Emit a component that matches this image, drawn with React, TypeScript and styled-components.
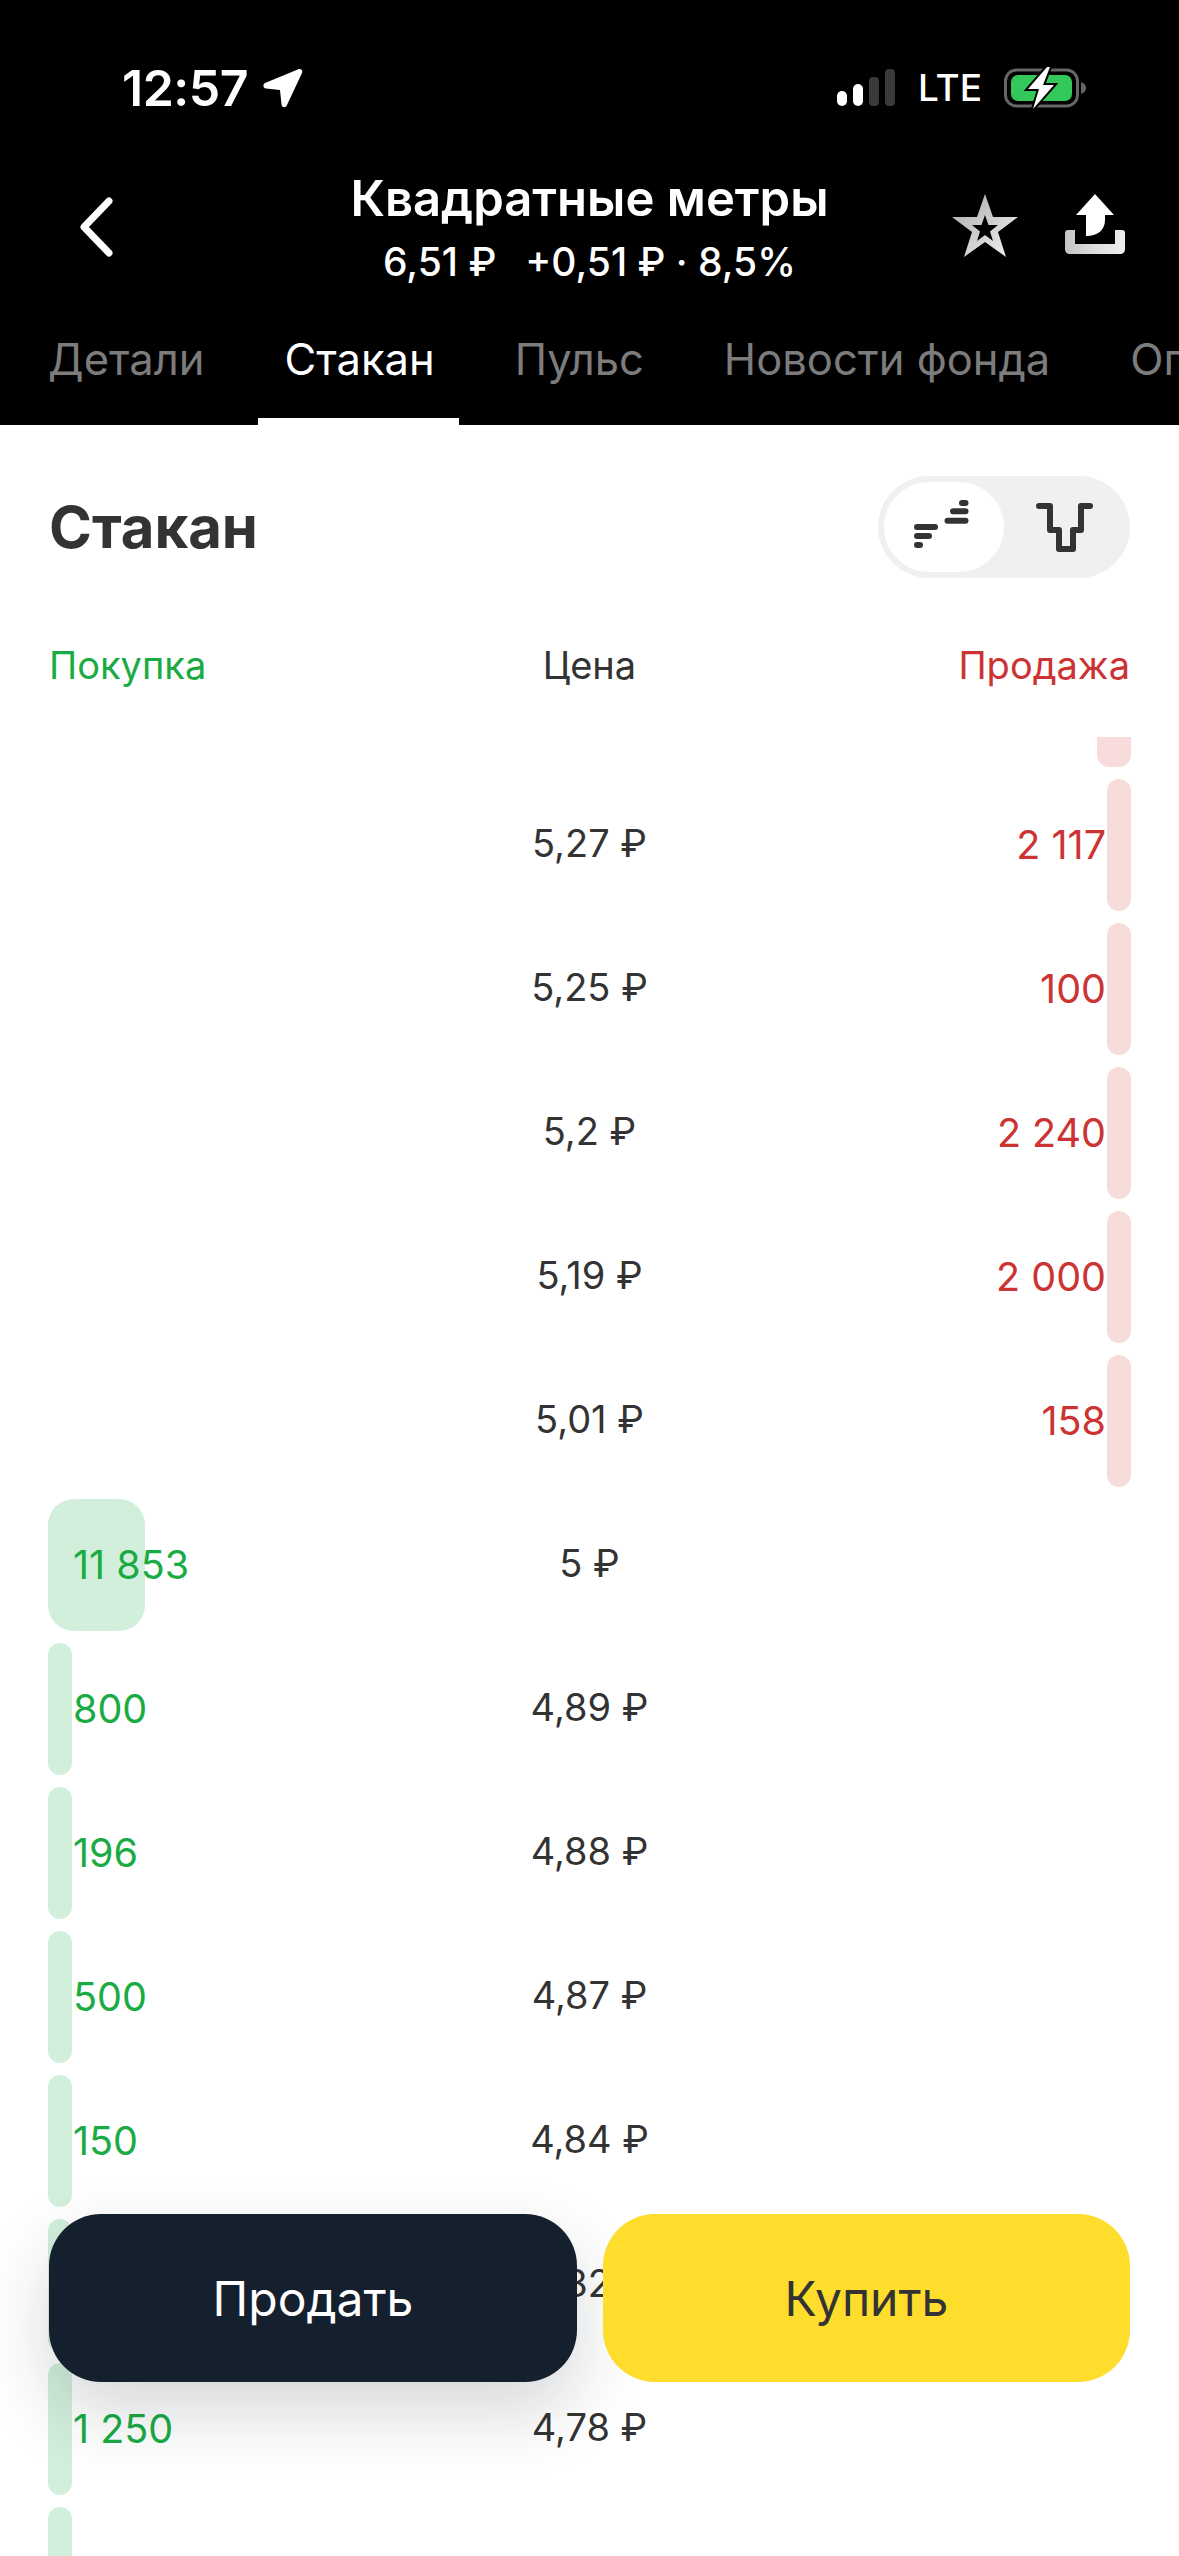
import React from 'react';
import styled, { createGlobalStyle } from 'styled-components';

const GlobalStyle = createGlobalStyle`
  html, body {
    margin: 0;
    padding: 0;
    background: #ffffff;
  }
  body {
    font-family: 'Inter', 'Roboto', 'Liberation Sans', sans-serif;
  }
`;

const Page = styled.div`
  position: relative;
  width: 1179px;
  height: 2556px;
  overflow: hidden;
  display: flex;
  flex-direction: column;
  background: #fff;
`;

const Header = styled.header`
  height: 425px;
  flex: none;
  background: #000;
  color: #fff;
  display: flex;
  flex-direction: column;
  box-sizing: border-box;
  padding-top: 60px;
`;

const StatusBar = styled.div`
  height: 56px;
  display: flex;
  align-items: center;
  padding: 0 93px 0 122px;
`;

const Time = styled.span`
  font-size: 50px;
  font-weight: 600;
  letter-spacing: -0.5px;
  line-height: 50px;
`;

const StatusRight = styled.div`
  margin-left: auto;
  display: flex;
  align-items: center;
`;

const Lte = styled.span`
  font-size: 37px;
  font-weight: 500;
  line-height: 40px;
  margin: 0 22px 0 23px;
`;

const NavRow = styled.div`
  position: relative;
  height: 112px;
  margin-top: 52px;
  display: flex;
  align-items: flex-start;
  justify-content: center;
`;

const BackButton = styled.div`
  position: absolute;
  left: 74px;
  top: 25px;
  display: flex;
`;

const TitleBlock = styled.div`
  display: flex;
  flex-direction: column;
  align-items: center;
`;

const Title = styled.div`
  font-size: 49px;
  font-weight: 600;
  line-height: 62px;
`;

const Subtitle = styled.div`
  display: flex;
  gap: 29px;
  margin-top: 9px;
  font-size: 39px;
  font-weight: 500;
  line-height: 46px;
  white-space: pre;
`;

const NavActions = styled.div`
  position: absolute;
  right: 54px;
  top: 26px;
  display: flex;
  align-items: flex-start;
  gap: 47px;
`;

const Tabs = styled.nav`
  margin-top: auto;
  height: 94px;
  display: flex;
  overflow: hidden;
  padding-left: 48px;
  gap: 80px;
  white-space: nowrap;
`;

const Tab = styled.div<{ $active?: boolean }>`
  position: relative;
  font-size: 43.5px;
  line-height: 56px;
  color: ${p => (p.$active ? '#fff' : '#7c7c7c')};

  ${p =>
    p.$active &&
    `
    &::after {
      content: '';
      position: absolute;
      left: -26px;
      right: -24px;
      bottom: 0;
      height: 7px;
      background: #fff;
    }
  `}
`;

const SectionHead = styled.div`
  flex: none;
  display: flex;
  align-items: center;
  justify-content: space-between;
  padding: 51px 49px 0 49px;
  height: 102px;
`;

const SectionTitle = styled.h1`
  margin: 0;
  font-size: 58px;
  font-weight: 700;
  color: #333333;
`;

const Toggle = styled.div`
  width: 252px;
  height: 102px;
  box-sizing: border-box;
  padding: 6px;
  border-radius: 51px;
  background: #eef0f1;
  display: flex;
`;

const ToggleOption = styled.div<{ $active?: boolean }>`
  width: 120px;
  border-radius: 45px;
  background: ${p => (p.$active ? '#fff' : 'transparent')};
  display: flex;
  align-items: center;
  justify-content: center;
`;

const Columns = styled.div`
  flex: none;
  display: grid;
  grid-template-columns: 1fr 1fr 1fr;
  padding: 0 49px;
  margin-top: 62px;
  font-size: 38px;
  line-height: 50px;
`;

const ColBuy = styled.div`
  color: #1aab44;
`;

const ColPrice = styled.div`
  color: #333;
  text-align: center;
`;

const ColSell = styled.div`
  color: #cc3333;
  text-align: right;
`;

const BookViewport = styled.div`
  flex: 1;
  min-height: 0;
  overflow: hidden;
  margin-top: 47px;
`;

const BookList = styled.div`
  margin-top: -102px;
  display: flex;
  flex-direction: column;
  gap: 12px;
  padding: 0 48px;
`;

const Row = styled.div`
  height: 132px;
  display: grid;
  grid-template-columns: 1fr 280px 1fr;
  font-size: 38px;
`;

const Side = styled.div<{ $sell?: boolean }>`
  position: relative;
  display: flex;
  align-items: center;
  box-sizing: border-box;
  font-size: 39.5px;
  justify-content: ${p => (p.$sell ? 'flex-end' : 'flex-start')};
  padding: ${p => (p.$sell ? '0 25px 0 0' : '0 0 0 25px')};
  color: ${p => (p.$sell ? '#cc3333' : '#1aab44')};
`;

const Bar = styled.div<{ $sell?: boolean; $large?: boolean }>`
  position: absolute;
  top: 0;
  bottom: 0;
  ${p => (p.$sell ? 'right: 0;' : 'left: 0;')}
  background: ${p => (p.$sell ? '#f8dcdc' : '#d2efdc')};
  border-radius: ${p => (p.$large ? '26px' : '12px')};
`;

const Quantity = styled.span`
  position: relative;
  white-space: nowrap;
`;

const Price = styled.div`
  display: flex;
  align-items: center;
  justify-content: center;
  color: #333;
  padding-bottom: 4px;
`;

const Actions = styled.div`
  position: absolute;
  left: 49px;
  top: 2214px;
  height: 168px;
  display: grid;
  grid-template-columns: 528px 527px;
  column-gap: 26px;
`;

const ActionButton = styled.div<{ $primary?: boolean }>`
  border-radius: 52px;
  display: flex;
  align-items: center;
  justify-content: center;
  font-size: 48px;
  background: ${p => (p.$primary ? '#ffdd2d' : '#15202e')};
  color: ${p => (p.$primary ? '#333' : '#fff')};
  box-shadow: ${p => (p.$primary ? 'none' : '0 30px 70px rgba(21, 32, 46, 0.18)')};
`;

const rows: { price: string; sell?: string; buy?: string; bar?: number; side?: 'buy' | 'sell' }[] = [
  { price: '', side: 'sell', bar: 34 },
  { price: '5,27 ₽', sell: '2 117', side: 'sell', bar: 24 },
  { price: '5,25 ₽', sell: '100', side: 'sell', bar: 24 },
  { price: '5,2 ₽', sell: '2 240', side: 'sell', bar: 24 },
  { price: '5,19 ₽', sell: '2 000', side: 'sell', bar: 24 },
  { price: '5,01 ₽', sell: '158', side: 'sell', bar: 24 },
  { price: '5 ₽', buy: '11 853', side: 'buy', bar: 97 },
  { price: '4,89 ₽', buy: '800', side: 'buy', bar: 24 },
  { price: '4,88 ₽', buy: '196', side: 'buy', bar: 24 },
  { price: '4,87 ₽', buy: '500', side: 'buy', bar: 24 },
  { price: '4,84 ₽', buy: '150', side: 'buy', bar: 24 },
  { price: '4,82 ₽', side: 'buy', bar: 24 },
  { price: '4,78 ₽', buy: '1 250', side: 'buy', bar: 24 },
  { price: '', side: 'buy', bar: 24 },
];

const SignalIcon = () => (
  <svg width="58" height="38" viewBox="0 0 58 38">
    <rect x="0" y="22" width="10" height="15" rx="5" fill="#fff" />
    <rect x="16" y="15" width="10" height="22" rx="5" fill="#fff" />
    <rect x="32" y="8" width="10" height="29" rx="4" fill="#3a3a3a" />
    <rect x="48" y="0" width="10" height="37" rx="4" fill="#3a3a3a" />
  </svg>
);

const BatteryIcon = () => (
  <svg width="82" height="42" viewBox="0 0 82 42">
    <rect x="1.5" y="3" width="72" height="36" rx="11" fill="none" stroke="#666" strokeWidth="3" />
    <rect x="7" y="8" width="61" height="26" rx="7" fill="#34c759" />
    <path d="M43 0 L24 22 H35 L29 42 L50 18 H39 L46 0 Z" fill="#fff" stroke="#000" strokeWidth="4" paintOrder="stroke" />
    <path d="M77 15 C80 16 82 18 82 21 C82 24 80 26 77 27 Z" fill="#666" />
  </svg>
);

const LocationIcon = () => (
  <svg width="40" height="40" viewBox="0 0 40 40" style={{ marginLeft: 15 }}>
    <path
      d="M36 1 C38 0.5 40 2 39 5 L24 37 C22.5 40.5 19 39.5 18.5 36.5 L17 22 L3 20.5 C0 20 -0.5 16.5 2 15 Z"
      fill="#fff"
    />
  </svg>
);

const BackIcon = () => (
  <svg width="42" height="68" viewBox="0 0 42 68" fill="none">
    <path d="M35 8 L10 34 L35 60" stroke="#fff" strokeWidth="7" strokeLinecap="round" strokeLinejoin="round" />
  </svg>
);

const StarIcon = () => (
  <svg width="66" height="63" viewBox="0 0 66 63">
    <defs>
      <linearGradient id="starFill" x1="0" y1="0" x2="1" y2="1">
        <stop offset="0" stopColor="#a8a8a8" />
        <stop offset="1" stopColor="#f4f4f4" />
      </linearGradient>
    </defs>
    <path
      fillRule="evenodd"
      fill="url(#starFill)"
      d="M33 0 L41 23 L66 23 L46 38 L54 63 L33 48 L12 63 L20 38 L0 23 L25 23 Z M33 21 L29.5 31 L20 31 L28 37.5 L25 47 L33 41 L41 47 L38 37.5 L46 31 L36.5 31 Z"
    />
  </svg>
);

const ShareIcon = () => (
  <svg width="60" height="60" viewBox="0 0 60 60">
    <defs>
      <linearGradient id="shareFill" x1="0" y1="0" x2="1" y2="0">
        <stop offset="0" stopColor="#c4c4c4" />
        <stop offset="0.5" stopColor="#dedede" />
        <stop offset="1" stopColor="#eeeeee" />
      </linearGradient>
    </defs>
    <path d="M30 0 L49 21 H40 V26 C40 35 34 42 21 42 V21 H11 Z" fill="#fff" />
    <path
      fill="url(#shareFill)"
      d="M3 36 H10 V50 H50 V36 H57 C59 36 60 37 60 39 V55 C60 58 58 60 55 60 H5 C2 60 0 58 0 55 V39 C0 37 1 36 3 36 Z"
    />
  </svg>
);

const SplitIcon = () => (
  <svg width="61" height="54" viewBox="0 0 61 54" fill="#333">
    <rect x="45" y="0" width="9.5" height="6" rx="3" />
    <rect x="36" y="8.3" width="18.5" height="6" rx="3" />
    <rect x="30.5" y="17.7" width="24" height="6" rx="3" />
    <rect x="0" y="24" width="24" height="6" rx="3" />
    <rect x="0" y="33" width="18" height="6" rx="3" />
    <rect x="0" y="42" width="9" height="6" rx="3" />
  </svg>
);

const DepthIcon = () => (
  <svg width="57" height="49" viewBox="0 0 57 49" fill="none">
    <path
      d="M3 3 H14 V27 H23 V46 H37 V27 H45 V3 H54"
      stroke="#333"
      strokeWidth="6"
      strokeLinecap="round"
      strokeLinejoin="round"
    />
  </svg>
);

const App: React.FC = () => {
  return (
    <Page>
      <GlobalStyle />
      <Header>
        <StatusBar>
          <Time>12:57</Time>
          <LocationIcon />
          <StatusRight>
            <SignalIcon />
            <Lte>LTE</Lte>
            <BatteryIcon />
          </StatusRight>
        </StatusBar>
        <NavRow>
          <BackButton>
            <BackIcon />
          </BackButton>
          <TitleBlock>
            <Title>Квадратные метры</Title>
            <Subtitle>
              <span>6,51 ₽</span>
              <span>+0,51 ₽ · 8,5%</span>
            </Subtitle>
          </TitleBlock>
          <NavActions>
            <StarIcon />
            <ShareIcon />
          </NavActions>
        </NavRow>
        <Tabs>
          <Tab>Детали</Tab>
          <Tab $active>Стакан</Tab>
          <Tab>Пульс</Tab>
          <Tab>Новости фонда</Tab>
          <Tab>Операции</Tab>
        </Tabs>
      </Header>

      <SectionHead>
        <SectionTitle>Стакан</SectionTitle>
        <Toggle>
          <ToggleOption $active>
            <SplitIcon />
          </ToggleOption>
          <ToggleOption>
            <DepthIcon />
          </ToggleOption>
        </Toggle>
      </SectionHead>

      <Columns>
        <ColBuy>Покупка</ColBuy>
        <ColPrice>Цена</ColPrice>
        <ColSell>Продажа</ColSell>
      </Columns>

      <BookViewport>
        <BookList>
          {rows.map((row, i) => (
            <Row key={i}>
              <Side>
                {row.side === 'buy' && <Bar $large={(row.bar ?? 0) > 40} style={{ width: row.bar }} />}
                {row.buy && <Quantity>{row.buy}</Quantity>}
              </Side>
              <Price>{row.price}</Price>
              <Side $sell>
                {row.side === 'sell' && <Bar $sell style={{ width: row.bar }} />}
                {row.sell && <Quantity>{row.sell}</Quantity>}
              </Side>
            </Row>
          ))}
        </BookList>
      </BookViewport>

      <Actions>
        <ActionButton>Продать</ActionButton>
        <ActionButton $primary>Купить</ActionButton>
      </Actions>
    </Page>
  );
};

export default App;
